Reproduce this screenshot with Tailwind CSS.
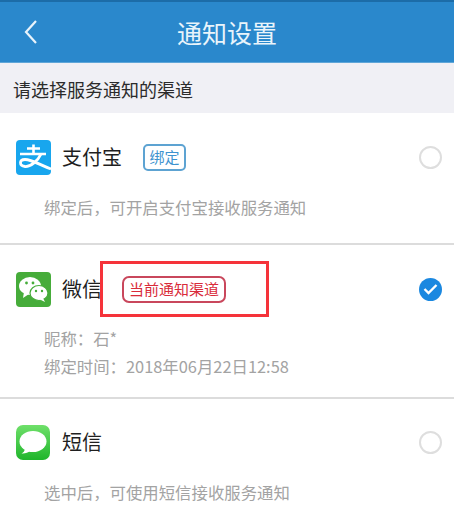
<!DOCTYPE html>
<html lang="zh-CN">

<head>
    <meta charset="utf-8" />
    <script src="https://cdn.jsdelivr.net/npm/@tailwindcss/browser@4"></script>
</head>

<body class="bg-white overflow-hidden font-['Noto_Sans_CJK_SC','Noto_Sans',sans-serif]">
    <div class="relative w-[454px] h-[523px] overflow-hidden">
        <!-- Header -->
        <div class="h-[63px] bg-[#2a88cc] border-t-2 border-[#1c6ca8] border-b border-b-[#5fa6d8] flex items-center relative">
            <svg class="absolute left-[23px] top-[17px]" width="16" height="26" viewBox="0 0 16 26" fill="none" stroke="#e8f3fb" stroke-width="2.2">
                <path d="M13 2 L3 13 L13 24" />
            </svg>
            <div class="w-full text-center text-[25px] leading-[32px] text-[#e9f4fb]">通知设置</div>
        </div>

        <!-- Section title -->
        <div class="h-[50px] bg-[#f0f0f5] pl-[13px] pt-[3px] flex items-center text-[18px] text-[#2b2b2b]">请选择服务通知的渠道</div>

        <!-- Alipay -->
        <div class="h-[132px] border-b-2 border-[#dcdcdc] pl-4 pr-[12px] pt-[26px]">
            <div class="flex items-center h-[36px]">
                <svg class="w-[35px] h-[35px] shrink-0" viewBox="0 0 35 35">
                    <rect width="35" height="35" rx="4" fill="#18a6ee" />
                    <path d="M11 8.5 H24 M17.5 4.5 V14 M4 14 H30" stroke="#fff" stroke-width="2.6" fill="none" />
                    <path d="M25 14 C22 21 14 27 9 26.5 C3 26 3 19.5 9 19.5 C16 19.5 24 25 35 29" stroke="#fff" stroke-width="2.8" fill="none" />
                </svg>
                <span class="ml-[11px] text-[20px] text-[#1f1f1f]">支付宝</span>
                <span class="ml-[21px] h-[27px] w-[43px] border-2 border-[#5da3d2] rounded-[5px] text-[15px] text-[#3d93cf] flex items-center justify-center">绑定</span>
                <span class="ml-auto w-[23px] h-[23px] rounded-full border-2 border-[#dedede]"></span>
            </div>
            <div class="ml-[28px] mt-[21px] text-[16.4px] leading-[22px] text-[#a3a3a3] whitespace-nowrap">绑定后，可开启支付宝接收服务通知</div>
        </div>

        <!-- WeChat -->
        <div class="h-[154px] border-b-2 border-[#dcdcdc] pl-4 pr-[12px] pt-[26px]">
            <div class="flex items-center h-[36px]">
                <svg class="w-[35px] h-[35px] shrink-0" viewBox="0 0 35 35">
                    <rect width="35" height="35" rx="4" fill="#46ac3a" />
                    <ellipse cx="14" cy="14" rx="11" ry="9" fill="#fff" />
                    <path d="M8 20 L7 26 L13 22 Z" fill="#fff" />
                    <ellipse cx="23" cy="21" rx="9" ry="7.5" fill="#fff" stroke="#46ac3a" stroke-width="1.2" />
                    <path d="M27 26 L29 30 L23 27 Z" fill="#fff" />
                    <circle cx="10.5" cy="11" r="1.4" fill="#46ac3a" />
                    <circle cx="17" cy="11" r="1.4" fill="#46ac3a" />
                    <circle cx="20" cy="19" r="1.2" fill="#46ac3a" />
                    <circle cx="26" cy="19" r="1.2" fill="#46ac3a" />
                </svg>
                <span class="ml-[11px] text-[20px] text-[#1f1f1f]">微信</span>
                <span class="ml-[20px] h-[27px] w-[104px] border-2 border-[#c9475c] rounded-[7px] text-[15px] text-[#d92b3a] flex items-center justify-center whitespace-nowrap">当前通知渠道</span>
                <span class="ml-auto w-[23px] h-[23px] rounded-full bg-[#1b88e0] flex items-center justify-center">
                    <svg width="15" height="12" viewBox="0 0 15 12" fill="none" stroke="#fff" stroke-width="2.4">
                        <path d="M1.5 6 L5.5 10 L13.5 2" />
                    </svg>
                </span>
            </div>
            <div class="ml-[28px] mt-[17px] text-[16.4px] leading-[28px] text-[#a3a3a3] whitespace-nowrap">
                <div>昵称：石*</div>
                <div>绑定时间：2018年06月22日12:58</div>
            </div>
        </div>

        <!-- SMS -->
        <div class="pl-4 pr-[12px] pt-[25px]">
            <div class="flex items-center h-[36px]">
                <svg class="w-[34px] h-[35px] shrink-0" viewBox="0 0 34 35">
                    <defs>
                        <linearGradient id="sms" x1="0" y1="0" x2="0" y2="1">
                            <stop offset="0" stop-color="#6fe06a" />
                            <stop offset="1" stop-color="#1fb52b" />
                        </linearGradient>
                    </defs>
                    <rect width="34" height="35" rx="7" fill="url(#sms)" />
                    <ellipse cx="17" cy="16.5" rx="13.5" ry="10.5" fill="#fff" />
                    <path d="M9 23 C9 26 7 28 5.5 28.5 C9 29 12 27.5 14 26 Z" fill="#fff" />
                </svg>
                <span class="ml-[12px] text-[20px] text-[#1f1f1f]">短信</span>
                <span class="ml-auto w-[23px] h-[23px] rounded-full border-2 border-[#dedede]"></span>
            </div>
            <div class="ml-[28px] mt-[21px] text-[16.4px] leading-[22px] text-[#a3a3a3] whitespace-nowrap">选中后，可使用短信接收服务通知</div>
        </div>

        <!-- Red annotation box over the screenshot -->
        <div class="absolute left-[100px] top-[261px] w-[169px] h-[56px] border-[3px] border-[#f5333a]"></div>
    </div>
</body>

</html>
